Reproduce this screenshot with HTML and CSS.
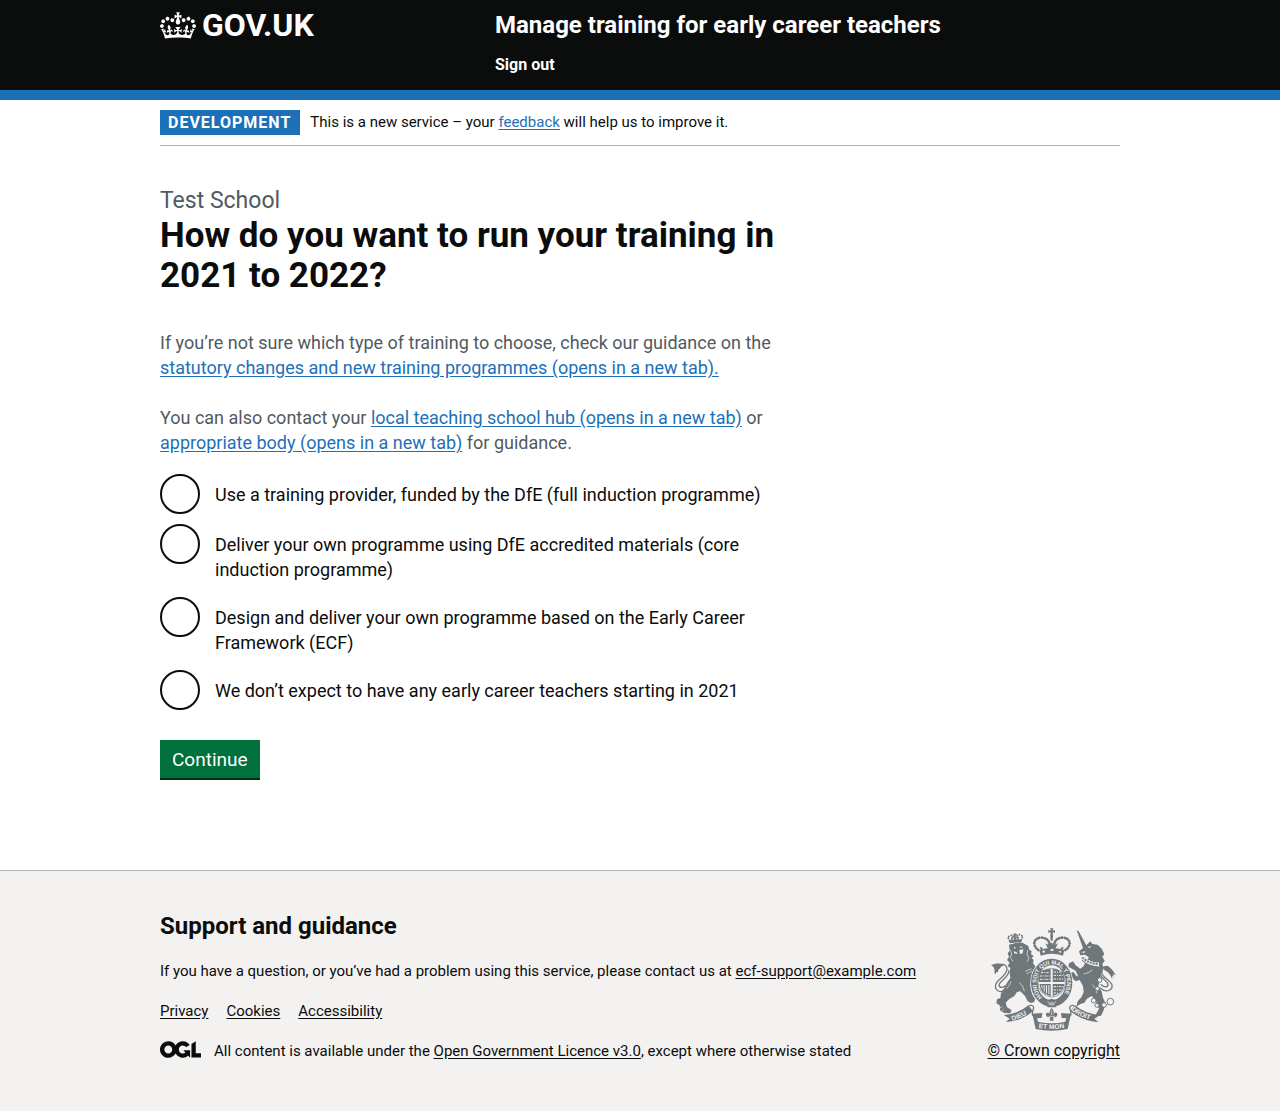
FILE: index.html
```html
<!DOCTYPE html>
<html lang="en">
<head>
<meta charset="utf-8">
<meta name="viewport" content="width=device-width, initial-scale=1">
<title>How do you want to run your training in 2021 to 2022?</title>
<link rel="stylesheet" href="styles.css">
</head>
<body>
<header class="header">
  <div class="container header-inner">
    <a class="logo" href="#">
      <svg class="logo-crown" viewBox="0 0 132 97" width="36" height="27" aria-hidden="true"><path fill="currentColor" fill-rule="evenodd" d="M25 30.2c3.5 1.5 7.7-.2 9.1-3.7 1.5-3.6-.2-7.8-3.9-9.2-3.6-1.4-7.6.3-9.1 3.9-1.4 3.5.3 7.5 3.9 9zM9 39.5c3.6 1.5 7.8-.2 9.2-3.7 1.5-3.6-.2-7.8-3.9-9.1-3.6-1.5-7.6.2-9.1 3.8-1.4 3.5.3 7.5 3.8 9zM4.4 57.2c3.5 1.5 7.7-.2 9.1-3.8 1.5-3.6-.2-7.7-3.9-9.1-3.5-1.5-7.6.3-9.1 3.8-1.4 3.5.3 7.6 3.9 9.1zm38.3-21.4c3.5 1.5 7.7-.2 9.1-3.8 1.5-3.6-.2-7.7-3.9-9.1-3.6-1.5-7.6.3-9.1 3.8-1.3 3.6.4 7.7 3.9 9.1zm64.4-5.6c-3.6 1.5-7.8-.2-9.1-3.7-1.5-3.6.2-7.8 3.8-9.2 3.6-1.4 7.7.3 9.2 3.9 1.3 3.5-.4 7.5-3.9 9zm15.9 9.3c-3.6 1.5-7.7-.2-9.1-3.7-1.5-3.6.2-7.8 3.7-9.1 3.6-1.5 7.7.2 9.2 3.8 1.5 3.5-.3 7.5-3.8 9zm4.7 17.7c-3.6 1.5-7.8-.2-9.2-3.8-1.5-3.6.2-7.7 3.9-9.1 3.6-1.5 7.7.3 9.2 3.8 1.3 3.5-.4 7.6-3.9 9.1zM89.3 35.8c-3.6 1.5-7.8-.2-9.2-3.8-1.4-3.6.2-7.7 3.9-9.1 3.6-1.5 7.7.3 9.2 3.8 1.4 3.6-.3 7.7-3.9 9.1zM69.7 17.7l8.9 4.7V9.3l-8.9 2.8c-.2-.3-.5-.6-.9-.9L72.4 0H59.6l3.5 11.2c-.3.3-.6.5-.9.9l-8.8-2.8v13.1l8.8-4.7c.3.3.6.7.9.9l-5 15.4v.1c-.2.8-.4 1.6-.4 2.4 0 4.1 3.1 7.5 7 8.1h.2c.3 0 .7.1 1 .1.4 0 .7 0 1-.1h.2c4-.6 7.1-4.1 7.1-8.1 0-.8-.1-1.7-.4-2.4V34l-5.1-15.4c.4-.2.7-.6 1-.9zM66 92.8c16.9 0 32.8 1.1 47.1 3.2 4-16.9 8.9-26.7 14-33.5l-9.6-3.4c1 4.9 1.1 7.2 0 10.2-1.5-1.4-3-4.3-4.2-8.7L108.6 76c2.8-2 5-3.2 7.5-3.3-4.4 9.4-10 11.9-13.6 11.2-4.3-.8-6.3-4.6-5.6-7.9 1-4.7 5.7-5.9 8-.5 4.3-8.7-3-11.4-7.6-8.8 7.1-7.2 7.9-13.5 2.1-21.1-8 6.1-8.1 12.3-4.5 20.8-4.7-5.4-12.1-2.5-9.5 6.2 3.4-5.2 7.9-2 7.2 3.1-.6 4.3-6.4 7.8-13.5 7.2-10.3-.9-10.9-8-11.2-13.8 2.5-.5 7.1 1.8 11 7.3L80.2 60c-4.1 4.4-8 5.3-12.3 5.4 1.4-4.4 8-11.6 8-11.6H55.5s6.4 7.2 7.9 11.6c-4.2-.1-8-1-12.3-5.4l1.4 16.4c3.9-5.5 8.5-7.7 10.9-7.3-.3 5.8-.9 12.8-11.1 13.8-7.2.6-12.9-2.9-13.5-7.2-.7-5 3.8-8.3 7.1-3.1 2.7-8.7-4.6-11.6-9.4-6.2 3.7-8.5 3.6-14.7-4.6-20.8-5.8 7.6-5 13.9 2.2 21.1-4.7-2.6-11.9.1-7.7 8.8 2.3-5.5 7.1-4.2 8.1.5.7 3.3-1.3 7.1-5.7 7.9-3.5.7-9-1.8-13.5-11.2 2.5.1 4.7 1.3 7.5 3.3l-4.7-15.4c-1.2 4.4-2.7 7.2-4.3 8.7-1.1-3-.9-5.3 0-10.2l-9.5 3.4c5 6.9 9.9 16.7 14 33.5 14.8-2.1 30.8-3.2 47.7-3.2z"/></svg>
      <span>GOV.UK</span>
    </a>
    <div class="header-content">
      <a class="service-name" href="#">Manage training for early career teachers</a>
      <nav><a class="sign-out" href="#">Sign out</a></nav>
    </div>
  </div>
</header>

<div class="container">
  <div class="phase-banner">
    <strong class="tag">Development</strong>
    <span>This is a new service – your <a class="link" href="#">feedback</a> will help us to improve it.</span>
  </div>

  <main class="main">
    <form class="form" action="#" method="post">
      <span class="caption">Test School</span>
      <h1 id="question">How do you want to run your training in 2021 to 2022?</h1>
      <div class="hint" id="hint">
        <p>If you’re not sure which type of training to choose, check our guidance on the <a class="link" href="#">statutory changes and new training programmes (opens in a new tab).</a></p>
        <p>You can also contact your <a class="link" href="#">local teaching school hub (opens in a new tab)</a> or <a class="link" href="#">appropriate body (opens in a new tab)</a> for guidance.</p>
      </div>
      <div class="radios" role="radiogroup" aria-labelledby="question" aria-describedby="hint">
        <div class="radio"><input type="radio" name="programme" id="full" value="full"><label for="full">Use a training provider, funded by the DfE (full induction programme)</label></div>
        <div class="radio"><input type="radio" name="programme" id="core" value="core"><label for="core">Deliver your own programme using DfE accredited materials (core induction programme)</label></div>
        <div class="radio"><input type="radio" name="programme" id="design" value="design"><label for="design">Design and deliver your own programme based on the Early Career Framework (ECF)</label></div>
        <div class="radio"><input type="radio" name="programme" id="none" value="none"><label for="none">We don’t expect to have any early career teachers starting in 2021</label></div>
      </div>
      <button class="button" type="submit">Continue</button>
    </form>
  </main>
</div>

<footer class="footer">
  <div class="container footer-inner">
    <div class="footer-main">
      <h2>Support and guidance</h2>
      <p>If you have a question, or you’ve had a problem using this service, please contact us at <a href="#">ecf-support@example.com</a></p>
      <ul class="footer-links">
        <li><a href="#">Privacy</a></li>
        <li><a href="#">Cookies</a></li>
        <li><a href="#">Accessibility</a></li>
      </ul>
      <div class="licence">
        <svg viewBox="0 0 483.2 195.7" width="41" height="17" aria-hidden="true"><path fill="currentColor" d="M421.5 142.8V.1l-50.7 32.3v161.1h112.4v-50.7zm-122.3-9.6A47.12 47.12 0 0 1 221 97.8c0-26 21.1-47.1 47.1-47.1 16.7 0 31.4 8.7 39.7 21.8l42.7-27.2A97.63 97.63 0 0 0 268.1 0c-36.5 0-68.3 20.1-85.1 49.7A98 98 0 0 0 97.8 0C43.9 0 0 43.9 0 97.8s43.9 97.8 97.8 97.8c36.5 0 68.3-20.1 85.1-49.7a97.76 97.76 0 0 0 149.6 25.4l19.4 22.2h3v-87.8h-80l24.3 27.5zM97.8 145c-26 0-47.1-21.1-47.1-47.1s21.1-47.1 47.1-47.1 47.1 21.1 47.1 47.1S123.8 145 97.8 145"/></svg>
        <span>All content is available under the <a href="#">Open Government Licence v3.0</a>, except where otherwise stated</span>
      </div>
    </div>
    <a class="copyright" href="#">
      <svg class="crest" viewBox="36 26 375 309" width="125" height="103" aria-hidden="true">
        <!-- tails -->
        <g fill="none" stroke="currentColor" stroke-linecap="round">
          <path stroke-width="4" d="M80 210C66 224 46 214 50 196C53 180 84 170 84 150C84 138 74 132 64 137"/>
          <path stroke-width="4" d="M78 200C68 208 58 204 61 194C65 184 90 172 90 154"/>
          <path stroke-width="4" d="M364 206C384 224 404 210 398 194C391 180 366 174 368 156C369 144 380 138 388 144"/>
          <path stroke-width="4" d="M366 196C380 208 390 202 386 192C380 182 360 172 361 156"/>
        </g>
        <g fill="currentColor">
          <path d="M36 137C48 132 60 130 78 136C64 140 64 148 57 153L58 159L52 158L50 165L46 160C48 150 46 144 36 137z"/>
          <path d="M378 141C388 136 400 150 411 168L403 164L404 174L399 168L400 182C396 168 388 156 374 152z"/>
          <!-- lion -->
          <path d="M90 76L110 71L132 71L148 80L150 90L158 96L156 104L164 110L158 116L164 122L162 132L170 142L168 154L158 160L162 172L158 182L154 196L156 212L160 226L168 238L166 248L156 251L146 246L138 230L124 216L114 218L106 230L90 240L80 250L84 264L98 272L94 282L76 281L64 274L62 258L52 252L54 240L64 236L66 222L76 206L84 190L94 176L92 160L94 146L86 140L92 130L84 122L90 112L86 102L92 94z"/>
          <!-- unicorn -->
          <path d="M293 33L299 36L322 78L334 66L340 74L356 76L368 88L376 104L370 112L377 124L370 134L374 146L366 166L362 184L358 202L368 216L372 236L380 252L374 272L366 290L350 286L360 268L350 244L338 230L324 238L316 250L304 254L292 262L296 246L308 232L314 218L312 200L302 182L290 186L276 174L274 160L284 158L290 168L298 172L290 154L268 142L270 132L282 126L290 138L304 148L314 140L320 126L330 114L318 106L304 108L300 96L312 86z"/>
          <!-- crown over the shield -->
          <path d="M214 27h9l-2 7 7-2v8l-7-1 1 11-1 14h-6l-1-14 1-11-7 1v-8l7 2z"/>
          <path d="M181 92Q218 80 256 92L252 109Q218 98 185 109z"/>
          <path d="M207 88l-8-16 8 4 0-7 5 12 6-13 6 13 5-12 0 7 8-4-8 16z"/>
          <path d="M186 94l-4-12 10 4zM250 94l4-12-10 4z"/>
        </g>
        <g fill="none" stroke="currentColor" stroke-width="8" stroke-linecap="round" stroke-dasharray="1 7">
          <path d="M178 92C158 78 164 54 188 55C208 56 212 70 215 84"/>
          <path d="M259 92C280 78 274 54 249 55C230 56 226 70 222 84"/>
        </g>
        <g fill="#f3f2f1">
          <path d="M103 83l9 2-5 3zM120 82l12 0-6 4zM121 92l12-2-2 12-8 2zM104 96l8 2 4 6-10-2z"/>
          <path d="M325 82l12-1-5 5zM306 98l14-2-5 5z"/>
          <path d="M190 96l5-3 4 5-6 3zM215 89l8 0 0 6-8 0zM241 95l6 1-2 5-5-3z"/>
        </g>
        <g fill="none" stroke="#f3f2f1" stroke-width="2">
          <path d="M138 156l20-8M142 164l18-10M120 190q14 8 16 26M96 186q-4 14-14 22M340 196q12 10 14 26M340 152q-12 10-26 12M62 266l8-4M68 276l6-6M94 92l4 12-4 10 8 12M146 92l-2 14 6 10-6 12"/>
        </g>
        <!-- coronet and collar -->
        <path fill="currentColor" d="M92 72l-2-7 6-2q14-5 28-2l4 1-1 8q-18-2-35 2z"/>
        <g fill="none" stroke="currentColor" stroke-linecap="round">
          <path stroke-width="5" stroke-dasharray="1 6" d="M92 64q-10-12 4-16q8 0 12 12M126 62q10-12-4-16q-10 0-12 14"/>
          <path stroke-width="5" d="M108 44v16M105 46h6M98 60l2-6M118 59l-2-6"/>
        </g>
        <path fill="none" stroke="#f3f2f1" stroke-width="13" d="M310 116Q330 136 360 136"/>
        <path fill="none" stroke="currentColor" stroke-width="6" stroke-dasharray="6 3" d="M310 114Q330 134 359 134"/>
        <path fill="none" stroke="currentColor" stroke-width="3" d="M308 122Q330 142 356 142"/>
        <!-- garter and shield -->
        <ellipse cx="218" cy="190" rx="64" ry="75" fill="#f3f2f1"/>
        <ellipse cx="218" cy="190" rx="52" ry="62" fill="none" stroke="currentColor" stroke-width="20"/>
        <path id="garter" fill="none" d="M189 234A46 56 0 1 1 247 234"/>
        <text class="motto" font-size="17"><textPath href="#garter">HONI SOIT QUI MAL Y PENSE</textPath></text>
        <ellipse cx="218" cy="190" rx="41" ry="43" fill="#f3f2f1" stroke="currentColor" stroke-width="2"/>
        <path fill="currentColor" d="M182 158q15-11 33-9v39h-35q-2-18 2-30zM221 149q20 0 32 11 5 14 3 28h-35zM221 194h35q-2 28-35 36z"/>
        <path fill="none" stroke="currentColor" stroke-width="4" d="M182 196h31v32q-28-8-29-32M192 198v18M199 198v24M206 198v28"/>
        <path fill="none" stroke="#f3f2f1" stroke-width="3" stroke-dasharray="7 3 3 3" d="M186 160h26M183 170h30M183 180h30M224 158h26M224 168h30M224 179h30M224 202h30M224 212h24M224 221h16"/>
        <path fill="currentColor" d="M198 246l20-8 20 8-8 18h-24z"/>
        <path fill="none" stroke="#f3f2f1" stroke-width="2" d="M206 246l8 12M230 246l-8 12M214 250h8v6h-8z"/>
        <!-- ribbons -->
        <path fill="currentColor" d="M74 287Q118 284 148 258L162 276Q126 306 80 308L92 298z"/>
        <path fill="currentColor" d="M364 287Q318 284 288 258L274 276Q312 306 358 308L346 298z"/>
        <path fill="none" stroke="currentColor" stroke-width="4" d="M150 259Q164 256 164 266Q160 274 160 286Q166 296 176 293M286 259Q272 256 272 266Q276 274 276 286Q270 296 260 293"/>
        <path fill="currentColor" d="M160 283L190 281L188 296L174 297L177 307Q218 316 259 307L262 297L248 296L246 281L276 283L266 329Q218 339 170 329z"/>
        <path id="dieu" fill="none" d="M100 304Q132 296 160 272"/>
        <path id="droit" fill="none" d="M275 270Q300 294 350 305"/>
        <path id="mon" fill="none" d="M174 325Q218 333 266 324"/>
        <text class="motto" font-size="20"><textPath href="#dieu">DIEU</textPath></text>
        <text class="motto" font-size="20"><textPath href="#droit" startOffset="3">DROIT</textPath></text>
        <text class="motto" font-size="20"><textPath href="#mon" startOffset="5">ET MON</textPath></text>
        <!-- fleur-de-lis -->
        <path fill="currentColor" d="M218 266q10 10 4 20q6-10 12-4q4 8-6 12h-6l2 10h-12l2-10h-6q-10-4-6-12q6-6 12 4q-6-10 4-20z"/>
        <path fill="none" stroke="#f3f2f1" stroke-width="2" d="M218 273v14M208 291h20"/>
        <!-- chain -->
        <g fill="#f3f2f1" stroke="currentColor" stroke-width="3">
          <circle cx="362" cy="182" r="7"/><circle cx="355" cy="208" r="6"/><circle cx="344" cy="244" r="7"/><circle cx="354" cy="258" r="6"/><circle cx="375" cy="257" r="7"/><circle cx="394" cy="247" r="10"/>
        </g>
      </svg>
      <span>© Crown copyright</span>
    </a>
  </div>
</footer>
</body>
</html>
```
FILE: styles.css
```css
* {
  box-sizing: border-box;
}

html {
  background: #f3f2f1;
}

body {
  margin: 0;
  background: #fff;
  color: #0b0c0c;
  font: 15px/20px Roboto, "Liberation Sans", sans-serif;
}

h1, h2, p, ul {
  margin: 0;
  padding: 0;
}

.container {
  max-width: 960px;
  margin: 0 auto;
}

.link {
  color: #1d70b8;
  text-underline-offset: 2px;
}

/* Header */
.header {
  background: #0b0c0c;
  border-bottom: 10px solid #1d70b8;
  color: #fff;
}

.header a {
  color: inherit;
  text-decoration: none;
}

.header-inner {
  display: grid;
  grid-template-columns: 335px 1fr;
  padding: 10px 0 15px;
}

.logo {
  display: flex;
  align-items: flex-start;
  gap: 6px;
  font-size: 32px;
  line-height: 30px;
  font-weight: 700;
}

.logo-crown {
  margin-top: 2px;
}

.service-name {
  display: block;
  margin-bottom: 15px;
  font-size: 24px;
  line-height: 30px;
  font-weight: 700;
}

.sign-out {
  display: block;
  font-size: 16px;
  line-height: 20px;
  font-weight: 700;
}

/* Phase banner */
.phase-banner {
  display: flex;
  align-items: flex-start;
  gap: 10px;
  padding: 10px 0;
  border-bottom: 1px solid #b1b4b6;
  line-height: 24px;
}

.tag {
  padding: 3px 9px 2px 8px;
  background: #1d70b8;
  color: #fff;
  font-size: 16px;
  line-height: 20px;
  letter-spacing: 1px;
  text-transform: uppercase;
}

/* Question */
.main {
  padding: 40px 0 90px;
}

.form {
  max-width: 630px;
}

.caption {
  display: block;
  color: #505a5f;
  font-size: 23px;
  line-height: 30px;
}

h1 {
  margin-bottom: 34px;
  font-size: 35px;
  line-height: 40px;
}

.hint {
  display: grid;
  gap: 25px;
  margin-bottom: 19px;
  color: #505a5f;
  font-size: 18px;
  line-height: 25px;
}

.radios {
  display: grid;
  gap: 10px;
  margin-bottom: 30px;
}

.radio {
  display: grid;
  grid-template-columns: 40px 1fr;
  gap: 15px;
  padding-right: 15px;
  font-size: 18px;
  line-height: 25px;
}

.radio input {
  appearance: none;
  width: 40px;
  height: 40px;
  margin: 0;
  border: 2px solid #0b0c0c;
  border-radius: 50%;
  background: #fff;
}

.radio input:checked {
  background: radial-gradient(#0b0c0c 10px, #fff 11px);
}

.radio label {
  padding: 8px 0 5px;
}

.radio:first-child label,
.radio:last-child label {
  padding-bottom: 7px;
}

.button {
  display: block;
  padding: 10px 12px 9px;
  border: 0;
  border-bottom: 2px solid #002d18;
  background: #00703c;
  color: #fff;
  font: 19px/19px Roboto, "Liberation Sans", sans-serif;
}

/* Footer */
.footer {
  padding: 40px 0 50px;
  border-top: 1px solid #b1b4b6;
  background: #f3f2f1;
}

.footer a {
  color: inherit;
  text-underline-offset: 2px;
}

.footer-inner {
  display: flex;
  justify-content: space-between;
  align-items: flex-end;
}

.footer h2 {
  margin-bottom: 20px;
  font-size: 24px;
  line-height: 30px;
}

.footer-links {
  display: flex;
  gap: 18px;
  margin: 20px 0;
  list-style: none;
}

.licence {
  display: flex;
  gap: 13px;
}

.copyright {
  display: flex;
  flex-direction: column;
  align-items: center;
  gap: 10px;
  white-space: nowrap;
  font-size: 16px;
}

.crest {
  color: #6f777b;
}

.motto {
  fill: #f3f2f1;
  font-family: "Liberation Sans", sans-serif;
  font-weight: 700;
}
```
